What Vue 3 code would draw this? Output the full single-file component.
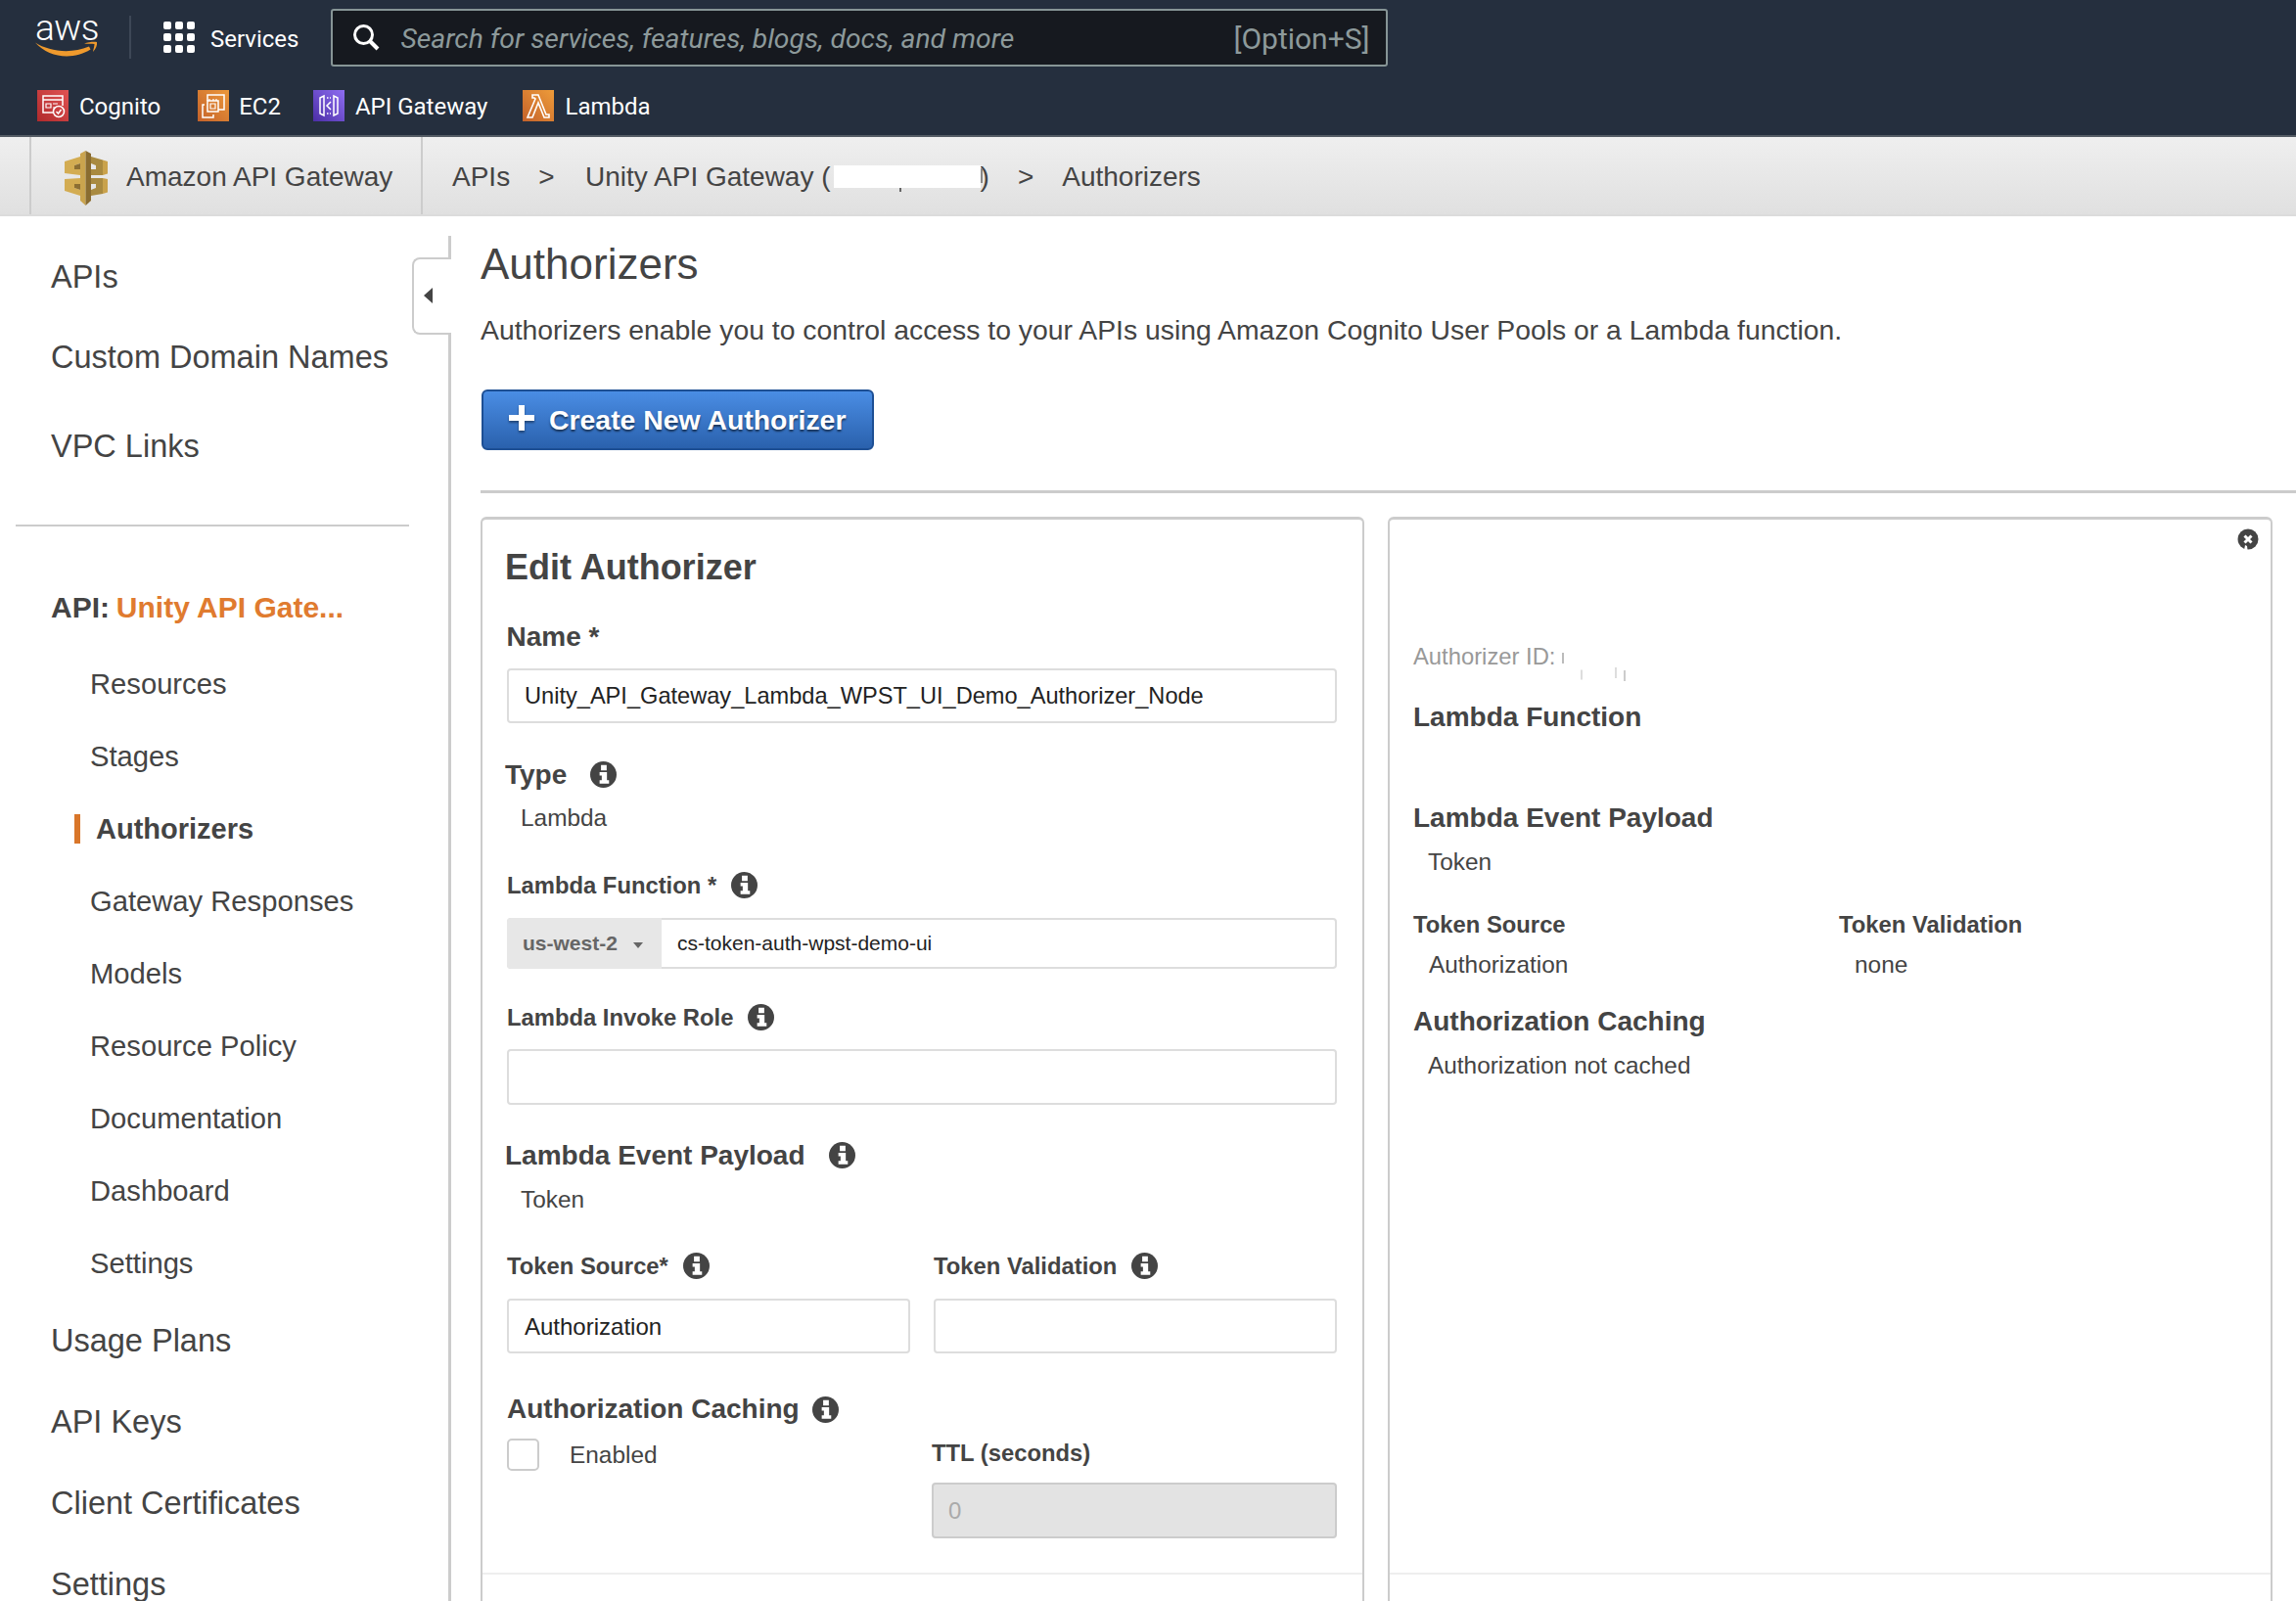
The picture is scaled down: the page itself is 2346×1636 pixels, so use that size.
<script setup>
const pinned = [
  { name: 'Cognito', icon: 'cognito' },
  { name: 'EC2', icon: 'ec2' },
  { name: 'API Gateway', icon: 'apigw' },
  { name: 'Lambda', icon: 'lambda' }
]
const apiLinks = ['Resources', 'Stages', 'Authorizers', 'Gateway Responses', 'Models', 'Resource Policy', 'Documentation', 'Dashboard', 'Settings']
const lowerLinks = ['Usage Plans', 'API Keys', 'Client Certificates', 'Settings']
</script>

<template>
  <div class="page">
    <svg class="defs" width="0" height="0">
      <symbol id="info-icon" viewBox="0 0 28 28">
        <circle cx="14" cy="14" r="14" fill="#444" />
        <path d="M11.500 4h6v5.500h-6zM10 11.500h7.800V20H20v3.500H10V20h2.300v-5H10z" fill="#fff" />
      </symbol>
    </svg>

    <header class="topnav">
      <div class="nav-row">
        <div class="aws-logo">
          <span class="aws-word">aws</span>
          <svg class="smile" viewBox="0 0 64 16" width="64" height="16" fill="#ef9a2d">
            <path d="M0 1.500c14 9 36 12 55 4l1.500 3C38 20 14 17 0 1.500z" />
            <path d="M50 2.500C54 1 60 .500 63 1c.500 3-1 7-4 10 .500-3 1.500-6 1.500-8-3-.500-7 0-10.500-.500z" />
          </svg>
        </div>
        <div class="nav-sep"></div>
        <svg class="grid-icon" viewBox="0 0 32 32" width="32" height="32" fill="#fff">
          <template v-for="y in [0, 12, 24]" :key="y">
            <rect v-for="x in [0, 12, 24]" :key="x" :x="x" :y="y" width="8" height="8" rx="2" />
          </template>
        </svg>
        <span class="services">Services</span>
        <div class="search">
          <svg viewBox="0 0 30 30" width="30" height="30" fill="none" stroke="#fff" stroke-width="3">
            <circle cx="12.500" cy="12.500" r="9" />
            <path d="M19 19l8 8" stroke-width="4" />
          </svg>
          <span class="search-text">Search for services, features, blogs, docs, and more</span>
          <span class="search-key">[Option+S]</span>
        </div>
      </div>
      <div class="pin-row">
        <div v-for="p in pinned" :key="p.name" class="pin" :class="'pin-' + p.icon">
          <span class="pin-icon">
            <svg v-if="p.icon === 'cognito'" viewBox="0 0 32 32" width="32" height="32" fill="none" stroke="#fff" stroke-width="1.500">
              <path d="M26 16V6H6v17h11M6 10h20" />
              <path d="M9 14h5v4H9zM16 14h5M16 18h2" stroke-width="1.200" />
              <circle cx="22" cy="22" r="5.500" />
              <path d="M19.500 22l2 2 3-4" />
            </svg>
            <svg v-else-if="p.icon === 'ec2'" viewBox="0 0 32 32" width="32" height="32" fill="none" stroke="#fff" stroke-width="1.500">
              <path d="M10 11V5h17v15h-6" />
              <path d="M10 11v11h11V11z" />
              <path d="M13 14h5v5h-5zM12 11V9M16 11V9M19 11V9" stroke-width="1.200" />
              <path d="M7 15H5v13h11v-3" />
            </svg>
            <svg v-else-if="p.icon === 'apigw'" viewBox="0 0 32 32" width="32" height="32" fill="none" stroke="#fff" stroke-width="1.500">
              <path d="M7 8l4-2v20l-4-2zM25 8l-4-2v20l4-2z" />
              <path d="M18 12l-4 4 4 4" />
              <path d="M14 8h4M14 24h4" stroke-dasharray="1.500 1.500" />
            </svg>
            <svg v-else viewBox="0 0 32 32" width="32" height="32" fill="none" stroke="#fff" stroke-width="1.600">
              <path d="M10 5h6l8 20h3v3h-5l-6-15-6 15H5l8-19-1-1h-2z" />
            </svg>
          </span>
          <span class="pin-label">{{ p.name }}</span>
        </div>
      </div>
    </header>

    <div class="crumbs">
      <div class="brand">
        <svg viewBox="0 0 70 70" width="70" height="70">
          <path d="M11 20l16-5v7l-6 2v4h6v6l-16-2z" fill="#d3ac52" />
          <path d="M21 24l6-2v6h-6z" fill="#8c6e32" />
          <path d="M55 20l-5-1.500V34l5-1.500z" fill="#c9a24c" />
          <path d="M50 18.500L38 15v7l5 2v4h-5v6h12z" fill="#a98a40" />
          <path d="M11 38l16-1v6h-6v4l6 2v6l-16-5z" fill="#d3ac52" />
          <path d="M21 43h6v6l-6-2z" fill="#8c6e32" />
          <path d="M55 38l-5-1v16l5-1.500z" fill="#c9a24c" />
          <path d="M50 37H38v6h5v4l-5 2v6l12-2z" fill="#a98a40" />
          <path d="M27 12l5.500-3v56L27 60z" fill="#caa44e" />
          <path d="M38 12l-5.500-3v56l5.500-5z" fill="#8a6c30" />
        </svg>
        <span>Amazon API Gateway</span>
      </div>
      <nav class="trail">
        <span>APIs</span>
        <span class="gt">&gt;</span>
        <span class="unity">Unity API Gateway (<span class="blot"></span>)</span>
        <span class="gt">&gt;</span>
        <span>Authorizers</span>
      </nav>
    </div>

    <div class="body">
      <aside class="sidebar">
        <button class="collapse" type="button"><i class="tri"></i></button>
        <a class="big first">APIs</a>
        <a class="big second">Custom Domain Names</a>
        <a class="big third">VPC Links</a>
        <div class="side-sep"></div>
        <div class="api-title">API: <em>Unity API Gate...</em></div>
        <a v-for="l in apiLinks" :key="l" class="sub" :class="{ active: l === 'Authorizers' }">{{ l }}</a>
        <a v-for="l in lowerLinks" :key="l + 'x'" class="big lower">{{ l }}</a>
      </aside>

      <main class="content">
        <h1>Authorizers</h1>
        <p class="lead">Authorizers enable you to control access to your APIs using Amazon Cognito User Pools or a Lambda function.</p>
        <button class="create" type="button">
          <svg viewBox="0 0 26 26" width="26" height="26"><path d="M10 0h6v10h10v6H16v10h-6V16H0v-6h10z" fill="#fff" /></svg>
          <span>Create New Authorizer</span>
        </button>
        <hr class="rule" />

        <div class="panels">
          <section class="panel edit">
            <h2>Edit Authorizer</h2>
            <label class="lbl-lg name-lbl">Name *</label>
            <div class="field name-field">Unity_API_Gateway_Lambda_WPST_UI_Demo_Authorizer_Node</div>

            <div class="lbl-lg type-lbl">Type <svg class="info"><use href="#info-icon" /></svg></div>
            <div class="val lambda-val">Lambda</div>

            <div class="lbl-sm fn-lbl">Lambda Function * <svg class="info"><use href="#info-icon" /></svg></div>
            <div class="fn-group">
              <span class="region">us-west-2 <i class="caret"></i></span>
              <span class="fn-name">cs-token-auth-wpst-demo-ui</span>
            </div>

            <div class="lbl-sm role-lbl">Lambda Invoke Role <svg class="info"><use href="#info-icon" /></svg></div>
            <div class="field role-field"></div>

            <div class="lbl-lg payload-lbl">Lambda Event Payload <svg class="info"><use href="#info-icon" /></svg></div>
            <div class="val token-val">Token</div>

            <div class="two">
              <div>
                <div class="lbl-sm">Token Source* <svg class="info"><use href="#info-icon" /></svg></div>
                <div class="field two-field">Authorization</div>
              </div>
              <div>
                <div class="lbl-sm">Token Validation <svg class="info"><use href="#info-icon" /></svg></div>
                <div class="field two-field"></div>
              </div>
            </div>

            <div class="lbl-lg cache-lbl">Authorization Caching <svg class="info"><use href="#info-icon" /></svg></div>
            <div class="cache-row">
              <div class="check-col">
                <span class="check"></span>
                <span class="val">Enabled</span>
              </div>
              <div class="ttl-col">
                <div class="lbl-sm">TTL (seconds)</div>
                <div class="field ttl">0</div>
              </div>
            </div>
            <div class="foot"></div>
          </section>

          <section class="panel summary">
            <svg class="refresh" viewBox="0 0 22 22" width="22" height="22">
              <circle cx="11" cy="11" r="10.500" fill="#444" />
              <path d="M7.500 7.500l7 7M14.500 7.500l-7 7" stroke="#fff" stroke-width="3" />
              <path d="M7 22l1-5 2 1 .5 4z" fill="#fff" />
            </svg>
            <div class="auth-id">Authorizer ID: <span class="blot-sm"></span></div>
            <div class="lbl-lg s-fn">Lambda Function</div>
            <div class="lbl-lg s-payload">Lambda Event Payload</div>
            <div class="val s-val">Token</div>
            <div class="s-two">
              <div>
                <div class="lbl-sm">Token Source</div>
                <div class="val s-val s-val2">Authorization</div>
              </div>
              <div>
                <div class="lbl-sm">Token Validation</div>
                <div class="val s-val s-val2">none</div>
              </div>
            </div>
            <div class="lbl-lg s-cache">Authorization Caching</div>
            <div class="val s-val">Authorization not cached</div>
            <div class="foot"></div>
          </section>
        </div>
      </main>
    </div>
  </div>
</template>

<style>
html, body { margin: 0; background: #fff; }
</style>

<style scoped>
.page {
  width: 2346px;
  height: 1636px;
  overflow: hidden;
  background: #fff;
  color: #444;
  font-family: "Liberation Sans", Arial, sans-serif;
}
.defs { position: absolute; }

/* dark console bar */
.topnav {
  height: 138px;
  background: #252f3e;
  border-bottom: 2px solid #545b64;
  font-family: Roboto, sans-serif;
  color: #fff;
}
.nav-row {
  height: 76px;
  display: flex;
  align-items: center;
  padding-left: 36px;
}
.aws-logo {
  width: 64px;
  height: 44px;
  position: relative;
  margin-top: -4px;
}
.aws-word {
  display: block;
  width: 60px;
  font: 300 37px/30px Roboto, sans-serif;
  letter-spacing: -.5px;
  text-align: center;
}
.smile { position: absolute; left: 0; top: 28px; }
.nav-sep { width: 2px; height: 44px; background: #3d4756; margin: 0 33px 0 32px; }
.services { font-size: 24px; margin: 3px 33px 0 16px; }
.search {
  width: 1080px;
  height: 59px;
  box-sizing: border-box;
  border: 2px solid #879596;
  border-radius: 3px;
  background: #16191f;
  display: flex;
  align-items: center;
  padding: 0 17px 0 19px;
}
.search-text {
  margin: 3px 0 0 20px;
  flex: 1;
  font-size: 28.300px;
  font-style: italic;
  color: #8d9a9b;
}
.search-key { font-size: 30px; color: #8d9a9b; margin-top: 3px; }
.pin-row {
  display: flex;
  padding-left: 38px;
  padding-top: 16px;
}
.pin { display: flex; align-items: center; gap: 11px; font-size: 24px; margin-right: 37px; }
.pin-label { margin-top: 2px; }
.pin-cognito { margin-right: 38px; }
.pin-ec2 { margin-right: 33px; }
.pin-ec2 .pin-label { margin-left: -1px; }
.pin-apigw { margin-right: 36px; }
.pin-icon { width: 32px; height: 32px; display: block; }
.pin-icon svg { display: block; }
.pin-cognito .pin-icon { background: linear-gradient(45deg, #b02a2c, #e05252); }
.pin-ec2 .pin-icon { background: linear-gradient(45deg, #c4622a, #ec983a); }
.pin-apigw .pin-icon { background: linear-gradient(45deg, #4b2ea6, #8e6ef2); }
.pin-lambda .pin-icon { background: linear-gradient(45deg, #c4622a, #ee9c3a); }

/* breadcrumb */
.crumbs {
  height: 79px;
  background: linear-gradient(#efefef, #e0e0e0);
  border-bottom: 2px solid #dcdcdc;
  display: flex;
  font-size: 28px;
  color: #444;
}
.brand {
  margin-left: 30px;
  width: 402px;
  box-sizing: border-box;
  border-left: 2px solid #ccc;
  border-right: 2px solid #ccc;
  display: flex;
  align-items: center;
  gap: 4px;
  padding-left: 23px;
}
.brand span { margin-top: 2px; }
.trail {
  display: flex;
  align-items: center;
  padding: 2px 0 0 30px;
}
.gt { margin: 0 29px; }
.unity { display: inline-flex; align-items: center; margin-left: 2.500px; }
.blot {
  display: block;
  position: relative;
  width: 150px;
  height: 23px;
  background: #fff;
  margin: 0 0 0 3px;
}
.blot::before {
  content: "";
  position: absolute;
  left: 67px;
  top: 23px;
  width: 2px;
  height: 4px;
  background: #666;
}
.blot::after {
  content: "";
  position: absolute;
  right: -2px;
  top: 3px;
  width: 2px;
  height: 15px;
  background: #888;
}

.body { display: flex; height: 1415px; }

/* left menu */
.sidebar {
  width: 461px;
  flex: none;
  box-sizing: border-box;
  margin-top: 20px;
  border-right: 3px solid #ccc;
  position: relative;
  display: flex;
  flex-direction: column;
  padding-left: 52px;
}
.sidebar > * { flex: none; }
.collapse {
  position: absolute;
  top: 22px;
  right: -3px;
  width: 40px;
  height: 79px;
  box-sizing: border-box;
  padding: 0;
  background: #fff;
  border: 2px solid #ccc;
  border-right: 0;
  border-radius: 8px 0 0 8px;
  display: flex;
  align-items: center;
  justify-content: center;
}
.tri {
  display: block;
  width: 0;
  height: 0;
  border: 8.500px solid transparent;
  border-right: 9px solid #444;
  border-left: 0;
  margin: 0 9px 2px 0;
}
.big { font-size: 32.500px; line-height: 40px; display: block; }
.first { margin-top: 22px; }
.second { margin-top: 42px; }
.third { margin-top: 51px; }
.side-sep { height: 2px; background: #ccc; width: 402px; margin: 60px 0 0 -36px; }
.api-title { font-size: 30px; font-weight: 700; line-height: 40px; margin-top: 63px; word-spacing: -1.500px; }
.api-title em { font-style: normal; color: #e07b2f; word-spacing: 0; }
.sub {
  display: block;
  font-size: 29.200px;
  line-height: 40px;
  height: 40px;
  margin-top: 34px;
  padding-left: 40px;
  position: relative;
}
.api-title + .sub { margin-top: 38px; }
.sub.active { font-weight: 700; padding-left: 46px; font-size: 29px; }
.sub.active::before {
  content: "";
  position: absolute;
  left: 24px;
  top: 5px;
  width: 6px;
  height: 30px;
  background: #d9762a;
}
.lower { margin-top: 39px; }
.sub + .lower { margin-top: 39px; }
.lower + .lower { margin-top: 43px; }

/* content */
.content { flex: 1; min-width: 0; padding-left: 30px; }
h1 { font-size: 44px; font-weight: 400; line-height: 52px; margin: 23px 0 0; }
.lead { font-size: 28.350px; line-height: 36px; margin: 23px 0 0; }
.create {
  display: flex;
  align-items: center;
  gap: 15px;
  width: 401px;
  height: 62px;
  margin: 43px 0 0 1px;
  padding: 0 0 0 26px;
  box-sizing: border-box;
  border: 2px solid #1d4f94;
  border-radius: 6px;
  background: linear-gradient(#4a8de4, #2a61ad);
  color: #fff;
  font: 700 28.400px "Liberation Sans", Arial, sans-serif;
  text-shadow: 0 2px 2px rgba(0, 0, 0, .55);
}
.create svg { margin-top: -4px; filter: drop-shadow(0 2px 1px rgba(0, 0, 0, .4)); }
.rule { border: 0; height: 3px; background: #ccc; margin: 41px 0 0; }
.panels { display: flex; gap: 24px; margin-top: 24px; }
.panel {
  width: 903px;
  height: 1200px;
  flex: none;
  box-sizing: border-box;
  border: 2px solid #ccc;
  border-top-width: 3px;
  border-radius: 6px;
  position: relative;
  padding: 0 26px 0 24px;
}
.summary { width: 904px; }
.foot { position: absolute; left: 0; right: 0; top: 1075.500px; height: 2px; background: #eee; }

h2 { font-size: 36px; line-height: 44px; margin: 27px 0 0 -1px; }
.lbl-lg { font-size: 28px; font-weight: 700; line-height: 34px; display: flex; align-items: center; }
.lbl-sm { font-size: 23.800px; font-weight: 700; line-height: 34px; display: flex; align-items: center; }
.info { flex: none; width: 27px; height: 27px; margin-left: 15px; }
.lbl-lg .info { margin-left: 24px; }
.field {
  height: 56px;
  box-sizing: border-box;
  margin-left: 1px;
  border: 2px solid #ddd;
  border-radius: 4px;
  padding: 0 16px;
  font-size: 24px;
  line-height: 53px;
  color: #222;
}
.val { font-size: 24.400px; line-height: 34px; }
.name-lbl { margin: 32px 0 0 .500px; }
.field.name-field { margin: 14.500px 0 0 1px; font-size: 23.600px; }
.type-lbl { margin: 36px 0 0 -1px; }
.lambda-val { margin: 10px 0 0 15px; }
.fn-lbl { margin: 35px 0 0 1px; }
.fn-group {
  height: 52px;
  margin: 16px 0 0 1px;
  box-sizing: border-box;
  border: 2px solid #ddd;
  border-radius: 4px;
  display: flex;
  font-size: 21px;
  line-height: 48px;
}
.region {
  width: 158px;
  flex: none;
  background: #e7e7e7;
  box-sizing: border-box;
  padding-left: 16px;
  margin: -2px 0 -2px -2px;
  line-height: 52px;
  font-weight: 700;
  color: #666;
  border-radius: 4px 0 0 4px;
}
.caret {
  display: inline-block;
  width: 0;
  height: 0;
  margin: 0 0 2px 10px;
  border: 5px solid transparent;
  border-top: 6px solid #666;
  border-bottom: 0;
}
.fn-name { padding-left: 16px; color: #222; }
.role-lbl { margin: 33px 0 0 1px; }
.role-field { margin-top: 15px; height: 57px; }
.payload-lbl { margin: 35px 0 0 -1px; }
.token-val { margin: 11px 0 0 15px; }
.two { display: grid; grid-template-columns: 412px 412px; column-gap: 24px; margin: 34px 0 0 1px; }
.two .field { margin: 16px 0 0; }
.cache-lbl { margin: 40.500px 0 0 1px; }
.cache-lbl .info { margin-left: 13px; }
.cache-row { display: grid; grid-template-columns: 434px 414px; margin: 9px 0 0 1px; }
.check-col { display: flex; align-items: center; gap: 31px; height: 40px; }
.check { width: 33px; height: 33px; box-sizing: border-box; border: 2px solid #ccc; border-radius: 5px; display: block; }
.check-col .val { margin-top: 1px; }
.ttl-col .lbl-sm { margin-top: 1.500px; }
.field.ttl {
  margin: 13.500px 0 0;
  height: 57px;
  background: #e3e3e3;
  border-color: #ccc;
  color: #aaa;
  padding-left: 15px;
}

.refresh { position: absolute; top: 9px; right: 12px; }
.auth-id { font-size: 23.800px; line-height: 34px; color: #999; margin-top: 123px; }
.blot-sm {
  display: inline-block;
  vertical-align: middle;
  width: 2px;
  height: 11px;
  background: #bbb;
  box-shadow: 19px 17px 0 -.500px #bbb, 54px 15px 0 #ddd, 63px 18px 0 #ccc;
}
.s-fn { margin-top: 27.500px; }
.s-payload { margin-top: 69px; }
.s-val { margin: 11px 0 0 15px; }
.s-two { display: grid; grid-template-columns: 435px 1fr; margin-top: 30.500px; }
.s-two .s-val2 { margin-top: 6.500px; margin-left: 16px; }
.s-cache { margin-top: 24.500px; }
</style>
